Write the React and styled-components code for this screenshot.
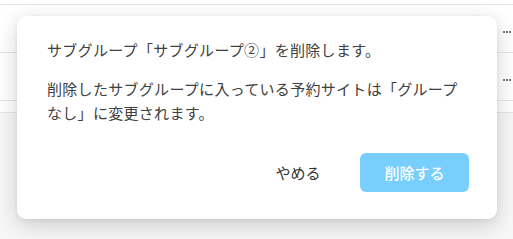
import React from "react";
import styled, { createGlobalStyle } from "styled-components";

const GlobalStyle = createGlobalStyle`
  html, body {
    margin: 0;
    padding: 0;
    background: #f7f7f7;
    font-family: "Noto Sans CJK JP", "Noto Sans", sans-serif;
  }
`;

const rows = [1, 2];

export default function App() {
  return (
    <>
      <GlobalStyle />
      <Page>
        <List>
          {rows.map((r) => (
            <Row key={r}>
              <MoreDots>
                <i />
                <i />
                <i />
              </MoreDots>
            </Row>
          ))}
          <FooterRow />
        </List>

        <Dialog role="dialog">
          <Body>
            <Message>サブグループ「サブグループ②」を削除します。</Message>
            <Message>
              削除したサブグループに入っている予約サイトは「グループなし」に変更されます。
            </Message>
          </Body>
          <Actions>
            <Button>やめる</Button>
            <Button primary>削除する</Button>
          </Actions>
        </Dialog>
      </Page>
    </>
  );
}

const Page = styled.div`
  position: relative;
  width: 513px;
  height: 239px;
  overflow: hidden;
`;

const List = styled.div`
  background: #fff;
  padding-top: 4px;
  border-bottom: 1px solid #e6e6e6;
`;

const Row = styled.div`
  height: 47px;
  border-top: 1px solid #e6e6e6;
  display: flex;
  align-items: center;
  justify-content: flex-end;
`;

const FooterRow = styled.div`
  height: 11px;
  border-top: 1px solid #e6e6e6;
`;

const MoreDots = styled.span`
  display: flex;
  gap: 1px;
  width: 10px;
  margin-top: 7px;
  i {
    width: 2px;
    height: 2px;
    border-radius: 50%;
    background: #5a4a50;
    flex: none;
  }
`;

const Dialog = styled.div`
  position: absolute;
  top: 16px;
  left: 17px;
  width: 480px;
  box-sizing: border-box;
  padding: 22px 28px 27px 30px;
  background: #fff;
  border-radius: 9px;
  box-shadow: 0 6px 22px rgba(0, 0, 0, 0.18), 0 1px 4px rgba(0, 0, 0, 0.06);
`;

const Body = styled.div`
  display: flex;
  flex-direction: column;
  gap: 15px;
  max-width: 414px;
`;

const Message = styled.p`
  margin: 0;
  font-size: 15px;
  letter-spacing: 0.3px;
  line-height: 24px;
  color: #404040;
`;

const Actions = styled.div`
  display: flex;
  justify-content: flex-end;
  gap: 12px;
  margin-top: 28px;
`;

const Button = styled.button`
  width: ${(p) => (p.primary ? "109px" : "100px")};
  height: 39px;
  border: none;
  border-radius: 6px;
  font-family: inherit;
  font-size: 15px;
  font-weight: ${(p) => (p.primary ? 500 : 400)};
  background: ${(p) => (p.primary ? "#78cffd" : "transparent")};
  color: ${(p) => (p.primary ? "#fff" : "#333")};
  cursor: pointer;
`;
